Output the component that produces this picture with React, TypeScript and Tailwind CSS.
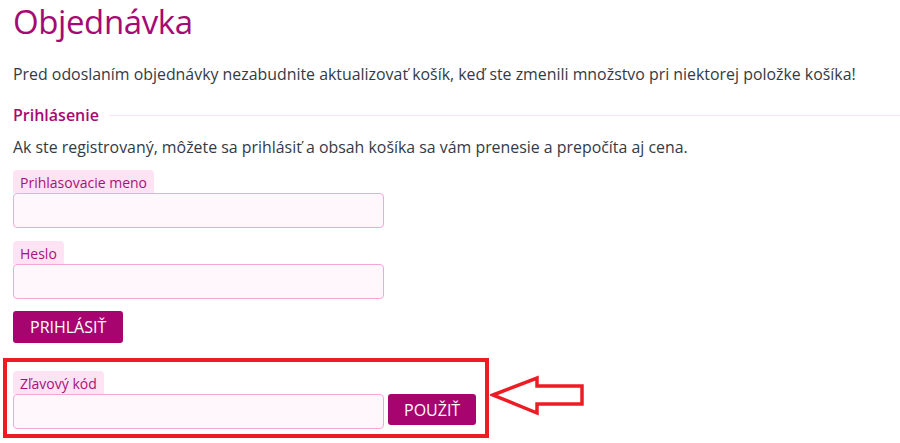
import React from "react";

const Field = ({ label, className = "" }: { label: string; className?: string }) => (
  <div className={`flex flex-col items-start ${className}`}>
    <span className="rounded-t-[4px] bg-[#fde3f4] px-[7px] pt-[3px] text-[14px] leading-[20px] text-[#a8117a]">
      {label}
    </span>
    <input
      type="text"
      className="h-[35px] w-[371px] rounded-[4px] border border-[#f7a6dc] bg-[#fff7fc] outline-none"
    />
  </div>
);

export default function App() {
  return (
    <div
      className="relative h-[443px] w-[900px] overflow-hidden bg-white text-[#333a45]"
      style={{ fontFamily: '"Open Sans", "Liberation Sans", sans-serif' }}
    >
      <div className="pl-[13px]">
        <h1 className="pt-[1px] text-[33px] leading-[42px] tracking-[-0.4px] text-[#a50a72]">Objednávka</h1>
        <p className="mt-[20px] text-[15.9px] leading-[22px]">
          Pred odoslaním objednávky nezabudnite aktualizovať košík, keď ste zmenili množstvo pri niektorej položke košíka!
        </p>

        <div className="mt-[19px] flex items-center gap-[10px]">
          <span className="text-[16px] font-semibold leading-[22px] text-[#a50a72]">Prihlásenie</span>
          <div className="h-px flex-1 bg-[#fde3f4]" />
        </div>
        <p className="mt-[10px] text-[15.9px] leading-[22px]">
          Ak ste registrovaný, môžete sa prihlásiť a obsah košíka sa vám prenesie a prepočíta aj cena.
        </p>

        <Field label="Prihlasovacie meno" className="mt-[12px]" />
        <Field label="Heslo" className="mt-[13px]" />

        <button className="mt-[12px] h-[32px] rounded-[3px] bg-[#a8046f] px-[17px] text-[16px] uppercase text-white">
          Prihlásiť
        </button>
      </div>

      <div className="ml-[3px] mt-[15px] flex h-[80px] w-[486px] items-end border-[4px] border-[#ed1c24] pb-[5px] pl-[6px]">
        <Field label="Zľavový kód" />
        <button className="mb-[4px] ml-[4px] h-[31px] rounded-[3px] bg-[#a8046f] px-[16px] text-[16px] uppercase text-white">
          Použiť
        </button>
      </div>

      <svg className="absolute left-[490px] top-[375px]" width="96" height="42" viewBox="0 0 96 42">
        <path
          d="M3 20 L47 3 L47 11 L92 11 L92 29 L47 29 L47 38 Z"
          fill="none"
          stroke="#ed1c24"
          strokeWidth="3.5"
          strokeLinejoin="miter"
        />
      </svg>
    </div>
  );
}
